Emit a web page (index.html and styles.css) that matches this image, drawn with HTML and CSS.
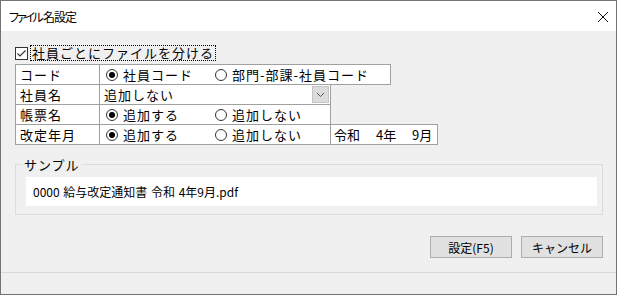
FILE: index.html
```html
<!DOCTYPE html>
<html lang="ja">
<head>
    <meta charset="UTF-8">
    <title>ファイル名設定</title>
    <link rel="stylesheet" href="styles.css">
</head>
<body>
    <div class="window">
        <div class="titlebar">
            <span class="title"><span class="kana">ファイル</span>名設定</span>
            <svg class="close" width="12" height="12" viewBox="0 0 12 12">
                <path d="M1 1 L11 11 M11 1 L1 11" stroke="#111" stroke-width="1" fill="none"/>
            </svg>
        </div>

        <div class="content">
            <div class="check-row">
                <span class="checkbox">
                    <svg width="11" height="11" viewBox="0 0 11 11">
                        <path d="M1.5 5.5 L4 8 L9.5 2.5" stroke="#333" stroke-width="1.2" fill="none"/>
                    </svg>
                </span>
                <span class="check-label">社員ごとにファイルを分ける</span>
            </div>

            <div class="grid">
                <div class="row">
                    <div class="cell label">コード</div>
                    <div class="cell value wide">
                        <span class="radio on"></span><span class="opt">社員コード</span>
                        <span class="radio"></span><span class="opt last">部門-部課-社員コード</span>
                    </div>
                </div>
                <div class="row">
                    <div class="cell label">社員名</div>
                    <div class="cell value combo">
                        <span class="combo-text">追加しない</span>
                        <span class="combo-btn">
                            <svg width="9" height="6" viewBox="0 0 9 6">
                                <path d="M1 1 L4.5 4.5 L8 1" stroke="#555" stroke-width="1" fill="none"/>
                            </svg>
                        </span>
                    </div>
                </div>
                <div class="row">
                    <div class="cell label">帳票名</div>
                    <div class="cell value">
                        <span class="radio on"></span><span class="opt">追加する</span>
                        <span class="radio"></span><span class="opt last">追加しない</span>
                    </div>
                </div>
                <div class="row">
                    <div class="cell label">改定年月</div>
                    <div class="cell value">
                        <span class="radio on"></span><span class="opt">追加する</span>
                        <span class="radio"></span><span class="opt last">追加しない</span>
                    </div>
                    <div class="cell era">令和　 4年　 9月</div>
                </div>
            </div>

            <fieldset class="sample">
                <legend>サンプル</legend>
                <div class="sample-box">0000 給与改定通知書 令和 4年9月.pdf</div>
            </fieldset>

            <div class="buttons">
                <button class="btn">設定(F5)</button>
                <button class="btn">キャンセル</button>
            </div>
        </div>

        <div class="status"></div>
    </div>
</body>
</html>
```

FILE: styles.css
```css
body {
    margin: 0;
    font-family: "Noto Sans CJK JP", "DejaVu Sans", sans-serif;
    font-size: 13px;
    color: #000;
    background: #f0f0f0;
}
.window {
    width: 617px;
    height: 295px;
    box-sizing: border-box;
    border: 1px solid #747474;
    background: #f0f0f0;
    display: flex;
    flex-direction: column;
}
.titlebar {
    height: 30px;
    background: #fff;
    display: flex;
    align-items: center;
    justify-content: space-between;
    padding: 0 7px 0 7px;
}
.title {
    font-size: 12px;
    letter-spacing: -1px;
}
.title .kana { letter-spacing: -4px; margin-right: 3px; }
.close { margin-top: 1px; }

.content {
    flex: 1;
    padding: 14px 0 0 14px;
}
.check-row {
    display: flex;
    align-items: center;
    height: 16px;
}
.checkbox {
    width: 11px;
    height: 11px;
    border: 1px solid #333;
    background: #fff;
    display: flex;
    align-items: center;
    justify-content: center;
}
.check-label {
    margin-left: 3px;
    padding: 0 1px;
    line-height: 14px;
    outline: 1px dotted #000;
    letter-spacing: 1px;
}

.grid {
    margin-top: 4px;
}
.row {
    display: flex;
    height: 21px;
    margin-top: -1px;
}
.cell {
    box-sizing: border-box;
    height: 21px;
    border: 1px solid #a0a0a0;
    background: #fff;
    display: flex;
    align-items: center;
    margin-left: -1px;
    letter-spacing: 1px;
    white-space: nowrap;
}
.cell:first-child { margin-left: 0; }
.label {
    width: 85px;
    padding-left: 4px;
}
.value {
    width: 232px;
    padding-left: 6px;
}
.value.wide { width: 292px; }
.era {
    width: 108px;
    padding-left: 3px;
    letter-spacing: 0;
}
.radio {
    width: 10px;
    height: 10px;
    border: 1px solid #333;
    border-radius: 50%;
    background: #fff;
    position: relative;
    flex: none;
}
.radio.on::after {
    content: "";
    position: absolute;
    left: 2px;
    top: 2px;
    width: 6px;
    height: 6px;
    border-radius: 50%;
    background: #000;
}
.opt {
    margin-left: 5px;
    width: 92px;
}
.opt.last { width: auto; }
.combo {
    padding-left: 4px;
    padding-right: 1px;
    justify-content: space-between;
}
.combo-btn {
    width: 17px;
    height: 17px;
    box-sizing: border-box;
    background: #dcdcdc;
    border: 1px solid #c4c4c4;
    display: flex;
    align-items: center;
    justify-content: center;
}

.sample {
    margin: 10px 13px 0 0;
    padding: 3px 5px 10px 10px;
    border: 1px solid #dcdcdc;
    height: 60px;
    box-sizing: border-box;
}
.sample legend {
    padding: 0 1px;
    margin-left: -3px;
    letter-spacing: 1px;
}
.sample-box {
    background: #fff;
    height: 29px;
    display: flex;
    align-items: center;
    padding-left: 7px;
    font-size: 12px;
    word-spacing: 1px;
}

.buttons {
    display: flex;
    justify-content: flex-end;
    gap: 9px;
    margin: 21px 13px 0 0;
}
.btn {
    width: 82px;
    height: 22px;
    font-family: inherit;
    font-size: 12px;
    background: #e1e1e1;
    border: 1px solid #adadad;
    padding: 0;
    color: #000;
}

.status {
    height: 21px;
    border-top: 1px solid #d9d9d9;
}
```
